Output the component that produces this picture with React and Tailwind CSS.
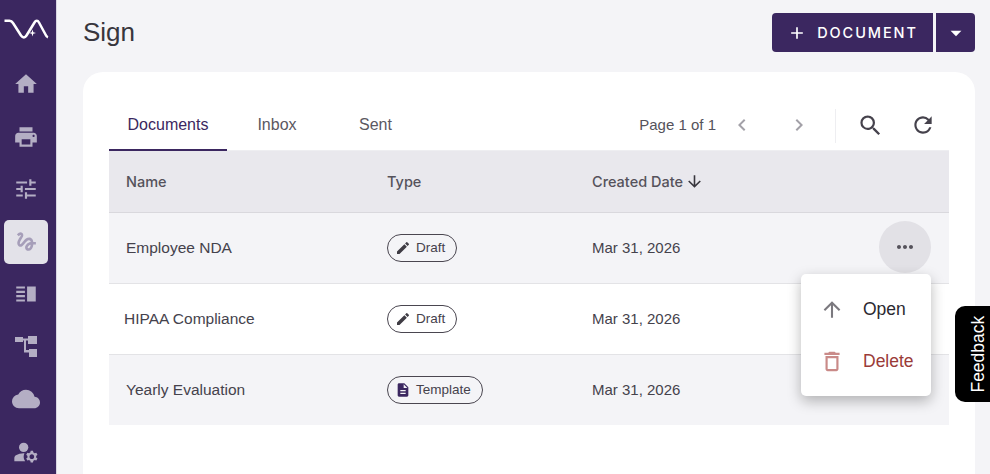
import React from "react";
import { MdHome, MdPrint, MdTune, MdGesture, MdVerticalSplit, MdCloud, MdManageAccounts, MdSearch, MdRefresh, MdArrowDownward, MdMoreHoriz, MdArrowUpward, MdOutlineDelete, MdEdit, MdDescription, MdAdd, MdArrowDropDown, MdChevronLeft, MdChevronRight } from "react-icons/md";

const Tree = ({ className }) => (
  <svg viewBox="0 0 22 21" className={className} fill="currentColor">
    <path d="M0 1h8v1.500h5V0h9v8h-9V4.500h-2V14h3v-1h8v8h-8v-4.500h-5V4.500H8V6H0z" />
  </svg>
);

const Logo = () => (
  <svg viewBox="0 0 57 59" className="h-[59px] w-[57px]" fill="none" stroke="white" strokeWidth="2.500">
    <path d="M4.500 20.800H9.500C11 20.800 12 21.300 13 23L21 35.500C22.800 38 25 38 26.500 35.500L34.500 22.500C35.800 20.300 37.800 20.300 39 22.500L45.500 34.500C46.300 36.300 47 37 48 37.300" strokeLinecap="butt" strokeLinejoin="round" />
    <path d="M32.500 29.500l.8 2.700 2.700.8-2.700.8-.8 2.700-.8-2.700-2.700-.8 2.700-.8z" fill="white" stroke="none" />
  </svg>
);

const nav = [
  { I: MdHome, s: "text-[26px]" },
  { I: MdPrint, s: "text-[26px]" },
  { I: MdTune, s: "text-[26px]" },
  { I: MdGesture, s: "text-[25px]", active: true },
  { I: MdVerticalSplit, s: "text-[26px]" },
  { I: Tree, s: "h-[21px] w-[22px]" },
  { I: MdCloud, s: "text-[28px]" },
  { I: MdManageAccounts, s: "text-[28px]" },
];

const Chip = ({ icon: I, label, iconClass }) => (
  <span className="inline-flex h-[28px] items-center gap-[5px] rounded-full border border-[#4a4650] pl-[7px] pr-[11px] text-[13.500px] text-[#45424c]">
    <I className={`text-[16px] ${iconClass}`} />
    {label}
  </span>
);

const rows = [
  { name: "Employee NDA", nameClass: "pl-[17px]", icon: MdEdit, label: "Draft", iconClass: "text-[#3f3c44]", bg: "bg-[#f4f4f7]", h: "h-[71px] border-b border-[#e3e3e6]", more: true },
  { name: "HIPAA Compliance", nameClass: "pl-[15px]", icon: MdEdit, label: "Draft", iconClass: "text-[#3f3c44]", bg: "bg-white", h: "h-[71px] border-b border-[#e3e3e6]" },
  { name: "Yearly Evaluation", nameClass: "pl-[17px]", icon: MdDescription, label: "Template", iconClass: "text-[#3b2760]", bg: "bg-[#f4f4f7]", h: "h-[70px]" },
];

export default function App() {
  return (
    <div className="relative flex h-[474px] w-[990px] overflow-hidden bg-[#f4f4f7] font-['Liberation_Sans',sans-serif] text-[#45424c]">
      <aside className="flex w-[57px] shrink-0 flex-col border-r border-[#d9d6e2] bg-[#3b2760]">
        <Logo />
        <div className="flex flex-col gap-[8.500px] pl-[4px] pt-[3px]">
          {nav.map(({ I, s, active }, i) => (
            <div key={i} className={`flex h-[44px] w-[44px] items-center justify-center rounded-[5px] ${active ? "bg-[#e3e2e9] text-[#a69eb9]" : "text-[#b4aec4]"}`}>
              <I className={s} />
            </div>
          ))}
        </div>
      </aside>

      <main className="flex min-w-0 flex-1 flex-col pl-[26px] pr-[15px]">
        <header className="flex h-[72px] items-start justify-between pt-[13px]">
          <h1 className="pt-[2px] text-[26px] leading-[34px] text-[#38363d]">Sign</h1>
          <div className="flex gap-[3px] text-white">
            <button className="flex h-[39px] w-[161px] items-center justify-center gap-[10px] rounded-l-[4px] bg-[#3b2760] font-['Inter',sans-serif] text-[14.500px] font-medium tracking-[1.900px]">
              <MdAdd className="text-[20px]" /> DOCUMENT
            </button>
            <button className="flex h-[39px] w-[39px] items-center justify-center rounded-r-[4px] bg-[#3b2760]">
              <MdArrowDropDown className="text-[26px]" />
            </button>
          </div>
        </header>

        <section className="flex-1 rounded-t-[20px] bg-white px-[26px] pt-[28px]">
          <div className="flex h-[51px] items-start justify-between border-b border-[#eeeef1]">
            <div className="flex h-[51px] text-[16px]">
              <div className="flex h-[51px] w-[118px] items-center justify-center border-b-2 border-[#3b2760] text-[#3b2760]">Documents</div>
              <div className="flex h-[50px] w-[100px] items-center justify-center text-[#5b5862]">Inbox</div>
              <div className="flex h-[50px] w-[97px] items-center justify-center text-[#5b5862]">Sent</div>
            </div>
            <div className="flex h-[50px] items-center text-[#55525b]">
              <span className="text-[15px]">Page 1 of 1</span>
              <MdChevronLeft className="ml-[14px] text-[24px] text-[#a3a1a8]" />
              <MdChevronRight className="ml-[33px] text-[24px] text-[#a3a1a8]" />
              <div className="mb-[-2px] ml-[24px] h-[34px] w-px bg-[#eeeef1]" />
              <MdSearch className="ml-[21px] text-[27px] text-[#45424c]" />
              <MdRefresh className="ml-[26px] mr-[13px] text-[26px] text-[#45424c]" />
            </div>
          </div>

          <div className="grid h-[62px] grid-cols-[261px_205px_1fr] items-center border-b border-[#d9d8dd] bg-[#e9e8ed] pl-[17px] font-['Inter',sans-serif] text-[14.500px] font-medium text-[#55525b]">
            <span>Name</span>
            <span>Type</span>
            <span className="flex items-center gap-[2px]">Created Date <MdArrowDownward className="text-[19px] text-[#38363d]" /></span>
          </div>

          {rows.map((r, i) => (
            <div key={i} className={`relative grid grid-cols-[278px_205px_1fr] items-center ${r.h} ${r.bg} text-[15px] text-[#45424c]`}>
              <span className={`${r.nameClass} text-[15.500px]`}>{r.name}</span>
              <span><Chip icon={r.icon} label={r.label} iconClass={r.iconClass} /></span>
              <span>Mar 31, 2026</span>
              {r.more && (
                <button className="absolute right-[18px] top-[8px] flex h-[52px] w-[52px] items-center justify-center rounded-full bg-[#e2e1e6] text-[#55525b]">
                  <MdMoreHoriz className="text-[24px]" />
                </button>
              )}
            </div>
          ))}
        </section>
      </main>

      <div className="absolute left-[801px] top-[274px] flex h-[122px] w-[130px] flex-col justify-center rounded-[5px] bg-white text-[17.500px] shadow-[0_5px_14px_rgba(0,0,0,0.28)]">
        <div className="flex h-[52px] items-center text-[#2b2930]">
          <MdArrowUpward className="ml-[18px] w-[26px] text-[25px] text-[#7b797f]" />
          <span className="ml-[18px]">Open</span>
        </div>
        <div className="flex h-[52px] items-center text-[#9a3b38]">
          <MdOutlineDelete className="ml-[18px] w-[26px] text-[27px] text-[#c98a88]" />
          <span className="ml-[18px]">Delete</span>
        </div>
      </div>

      <div className="absolute left-[955px] top-[306px] flex h-[96px] w-[35px] items-center justify-center rounded-l-[10px] bg-black pl-[12px]">
        <span className="-rotate-90 whitespace-nowrap text-[17.500px] text-white">Feedback</span>
      </div>
    </div>
  );
}
